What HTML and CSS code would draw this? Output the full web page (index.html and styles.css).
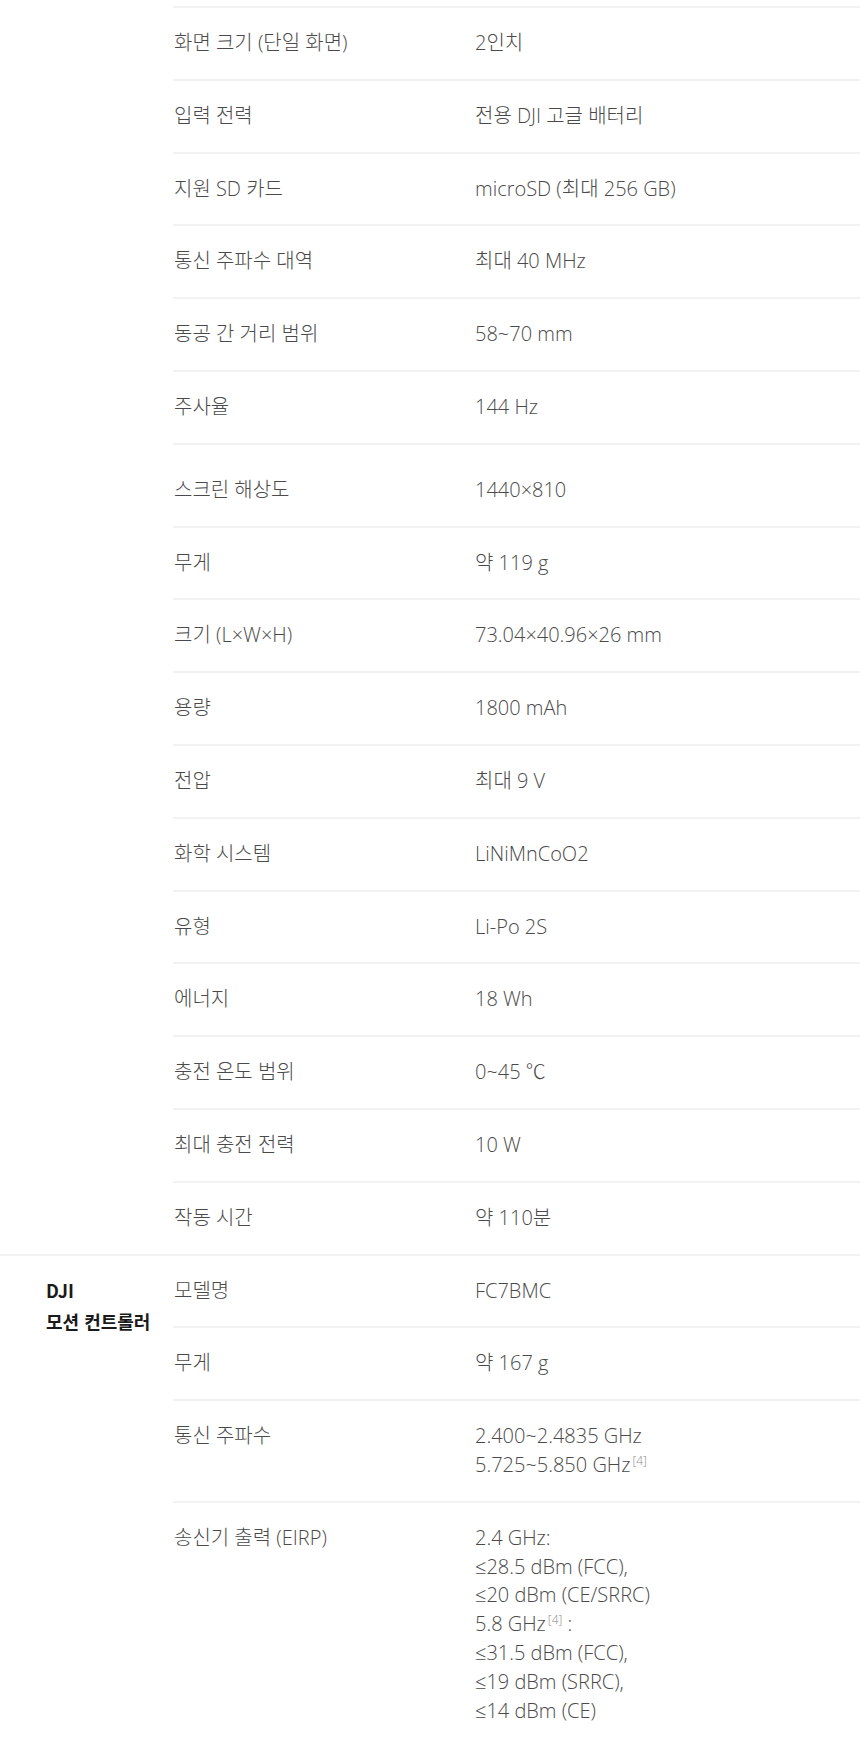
FILE: index.html
```html
<!DOCTYPE html>
<html lang="ko">

<head>
  <meta charset="utf-8">
  <link rel="stylesheet" href="styles.css">
</head>

<body>

  <div class="specs">

    <!-- DJI 고글 (이어지는 부분) -->
    <div class="group">
      <div class="group-title"></div>
      <div class="rows continued">
        <div class="row"><div class="label">화면 크기 (단일 화면)</div><div class="value">2인치</div></div>
        <div class="row"><div class="label">입력 전력</div><div class="value">전용 DJI 고글 배터리</div></div>
        <div class="row"><div class="label">지원 SD 카드</div><div class="value">microSD (최대 256 GB)</div></div>
        <div class="row"><div class="label">통신 주파수 대역</div><div class="value">최대 40 MHz</div></div>
        <div class="row"><div class="label">동공 간 거리 범위</div><div class="value">58~70 mm</div></div>
        <div class="row"><div class="label">주사율</div><div class="value">144 Hz</div></div>
        <div class="row tall"><div class="label">스크린 해상도</div><div class="value">1440×810</div></div>
        <div class="row"><div class="label">무게</div><div class="value">약 119 g</div></div>
        <div class="row"><div class="label">크기 (L×W×H)</div><div class="value">73.04×40.96×26 mm</div></div>
        <div class="row"><div class="label">용량</div><div class="value">1800 mAh</div></div>
        <div class="row"><div class="label">전압</div><div class="value">최대 9 V</div></div>
        <div class="row"><div class="label">화학 시스템</div><div class="value">LiNiMnCoO2</div></div>
        <div class="row"><div class="label">유형</div><div class="value">Li-Po 2S</div></div>
        <div class="row"><div class="label">에너지</div><div class="value">18 Wh</div></div>
        <div class="row"><div class="label">충전 온도 범위</div><div class="value">0~45 ℃</div></div>
        <div class="row"><div class="label">최대 충전 전력</div><div class="value">10 W</div></div>
        <div class="row"><div class="label">작동 시간</div><div class="value">약 110분</div></div>
      </div>
    </div>

    <div class="group">
      <div class="group-title">DJI<br>모션 컨트롤러</div>
      <div class="rows">
        <div class="row"><div class="label">모델명</div><div class="value">FC7BMC</div></div>
        <div class="row"><div class="label">무게</div><div class="value">약 167 g</div></div>
        <div class="row">
          <div class="label">통신 주파수</div>
          <div class="value">2.400~2.4835 GHz<br>5.725~5.850 GHz<sup>[4]</sup></div>
        </div>
        <div class="row">
          <div class="label">송신기 출력 (EIRP)</div>
          <div class="value">2.4 GHz:<br>≤28.5 dBm (FCC),<br>≤20 dBm (CE/SRRC)<br>5.8 GHz<sup>[4]</sup> :<br>≤31.5 dBm (FCC),<br>≤19 dBm (SRRC),<br>≤14 dBm (CE)</div>
        </div>
      </div>
    </div>

  </div>

</body>

</html>
```

FILE: styles.css
```css
body {
  margin: 0;
  background-color: #fff;
  font-family: "Open Sans", "Noto Sans CJK KR", sans-serif;
  color: #4a4a4a;
}

.specs {
  padding-top: 6px;
}

.group {
  display: grid;
  grid-template-columns: 173px 1fr;
}

.group + .group {
  border-top: 2px solid #f2f2f2;
}

.group-title {
  padding: 19px 0 0 46px;
  font-family: "Noto Sans CJK KR", sans-serif;
  font-size: 18px;
  line-height: 31px;
  font-weight: 700;
  color: #1a1a1a;
}

.rows.continued {
  border-top: 2px solid #f2f2f2;
}

.row {
  display: grid;
  grid-template-columns: 302px 1fr;
  padding: 21px 0;
  font-size: 20px;
  font-size-adjust: 0.535;
  font-weight: 300;
  line-height: 28.8px;
}

.row + .row {
  border-top: 2px solid #f2f2f2;
}

.row.tall {
  padding-top: 31px;
}

.label {
  padding-left: 1px;
}

.value sup {
  font-size: 12px;
  line-height: 0;
  color: #8a8a8a;
  margin-left: 2px;
  vertical-align: 7px;
}
```
